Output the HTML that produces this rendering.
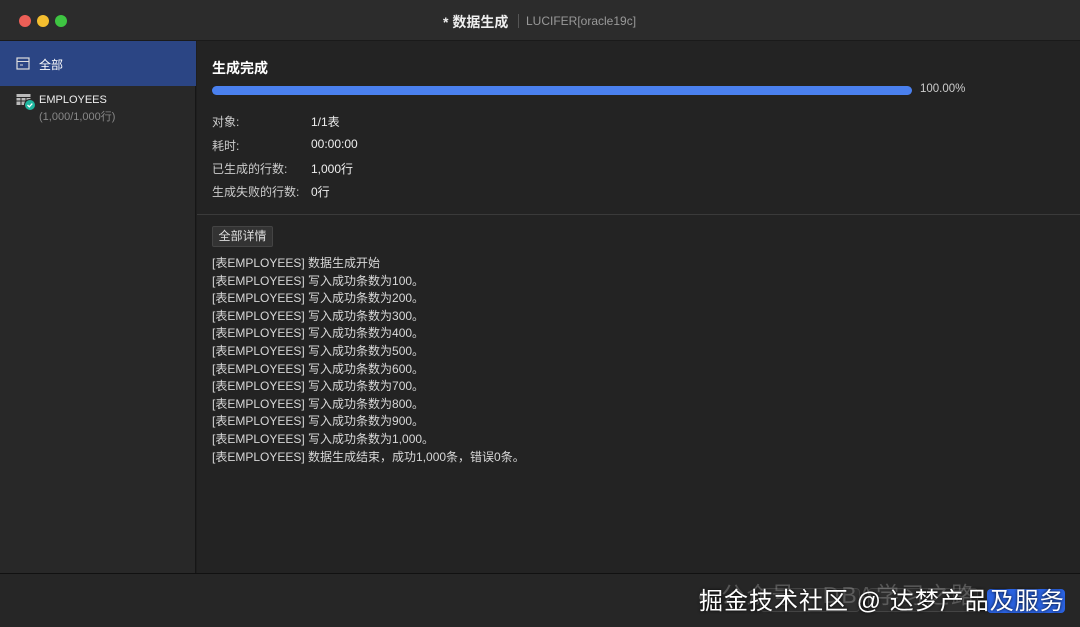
<!DOCTYPE html><html><head><meta charset="utf-8"><style>
*{margin:0;padding:0;box-sizing:border-box}
body{width:1080px;height:627px;background:#1e1e1e;font-family:"Liberation Sans","Noto Sans CJK SC",sans-serif;color:#ddd;position:relative;overflow:hidden;font-size:12px}
.title{position:absolute;left:0;top:0;width:1080px;height:41px;background:#2c2c2c;border-bottom:1px solid #1a1a1a}
.dot{position:absolute;top:15px;width:12px;height:12px;border-radius:50%}
.side{position:absolute;left:0;top:41px;width:196px;height:532px;background:#282828;border-right:1px solid #161616}
.sel{position:absolute;left:0;top:0;width:196px;height:45px;background:#2b4584}
.main{position:absolute;left:197px;top:41px;width:883px;height:532px;background:#232323}
.bot{position:absolute;left:0;top:573px;width:1080px;height:54px;background:#262626;border-top:1px solid #111}
.lbl{position:absolute;left:15px;color:#ccc}
.val{position:absolute;left:114px;color:#eee}
.log{position:absolute;left:15px;top:214px;line-height:17.6px;color:#d8d8d8}
</style></head><body>
<div class="title">
<div class="dot" style="left:19px;background:#ec5f57"></div>
<div class="dot" style="left:37px;background:#f4be2f"></div>
<div class="dot" style="left:55px;background:#3ec542"></div>
<div style="position:absolute;left:443px;top:12px;font-size:14px;font-weight:bold;color:#eee">* 数据生成</div>
<div style="position:absolute;left:518px;top:14px;width:1px;height:14px;background:#555"></div>
<div style="position:absolute;left:526px;top:14px;font-size:12px;color:#999">LUCIFER[oracle19c]</div>
</div>
<div class="side">
<div class="sel"></div>
<svg style="position:absolute;left:16px;top:16px" width="14" height="13"><rect x="1" y="1" width="12" height="11" fill="none" stroke="#ddd" stroke-width="1.2"/><line x1="1" y1="4.5" x2="13" y2="4.5" stroke="#ddd"/><line x1="4" y1="8" x2="7" y2="8" stroke="#ddd"/></svg>
<div style="position:absolute;left:39px;top:15px;color:#fff">全部</div>
<svg style="position:absolute;left:16px;top:52px" width="22" height="20"><rect x="0.5" y="1" width="14" height="11" fill="#bbb"/><g stroke="#282828" stroke-width="1"><line x1="0" y1="4.5" x2="15" y2="4.5"/><line x1="0" y1="8" x2="15" y2="8"/><line x1="5" y1="4" x2="5" y2="12"/><line x1="10" y1="4" x2="10" y2="12"/></g><circle cx="14" cy="12" r="5.5" fill="#1fb7a0" stroke="#282828"/><path d="M11.5 12l1.8 1.8 3-3.2" stroke="#fff" fill="none" stroke-width="1.3"/></svg>
<div style="position:absolute;left:39px;top:53px;color:#eee;font-size:11px">EMPLOYEES</div>
<div style="position:absolute;left:39px;top:67px;color:#888;font-size:11px">(1,000/1,000行)</div>
</div>
<div class="main">
<div style="position:absolute;left:15px;top:17px;font-size:14px;font-weight:bold;color:#fff">生成完成</div>
<div style="position:absolute;left:15px;top:45px;width:700px;height:9px;border-radius:5px;background:#4a80ee"></div>
<div style="position:absolute;left:723px;top:42px;color:#ccc;font-size:11.5px">100.00%</div>
<div class="lbl" style="top:72px">对象:</div><div class="val" style="top:72px">1/1表</div>
<div class="lbl" style="top:96px">耗时:</div><div class="val" style="top:96px">00:00:00</div>
<div class="lbl" style="top:119px">已生成的行数:</div><div class="val" style="top:119px">1,000行</div>
<div class="lbl" style="top:142px">生成失败的行数:</div><div class="val" style="top:142px">0行</div>
<div style="position:absolute;left:0;top:173px;width:883px;height:1px;background:#3a3a3a"></div>
<div style="position:absolute;left:15px;top:185px;width:61px;height:21px;background:#333;border:1px solid #444;border-radius:2px;color:#ddd;text-align:center;line-height:19px">全部详情</div>
<div class="log">[表EMPLOYEES] 数据生成开始<br>[表EMPLOYEES] 写入成功条数为100。<br>[表EMPLOYEES] 写入成功条数为200。<br>[表EMPLOYEES] 写入成功条数为300。<br>[表EMPLOYEES] 写入成功条数为400。<br>[表EMPLOYEES] 写入成功条数为500。<br>[表EMPLOYEES] 写入成功条数为600。<br>[表EMPLOYEES] 写入成功条数为700。<br>[表EMPLOYEES] 写入成功条数为800。<br>[表EMPLOYEES] 写入成功条数为900。<br>[表EMPLOYEES] 写入成功条数为1,000。<br>[表EMPLOYEES] 数据生成结束，成功1,000条，错误0条。</div>
</div>
<div class="bot">
<div style="position:absolute;left:760px;top:14px;width:100px;height:24px;background:#2e2e2e;border:1px solid #444;border-radius:4px"></div>
<div style="position:absolute;left:868px;top:14px;width:110px;height:24px;background:#2e2e2e;border:1px solid #444;border-radius:4px"></div>
<div style="position:absolute;left:987px;top:15px;width:78px;height:24px;background:#2a62e0;border-radius:4px"></div>
<div style="position:absolute;left:697px;top:2px;font-size:23px;letter-spacing:2px;color:rgba(200,200,200,.3)">● 公众号 · DBA学习之路</div>
<div style="position:absolute;left:699px;top:7px;font-size:24px;letter-spacing:1px;color:#fff;text-shadow:0 0 3px #000">掘金技术社区 @ 达梦产品及服务</div>
</div>
</body></html>
